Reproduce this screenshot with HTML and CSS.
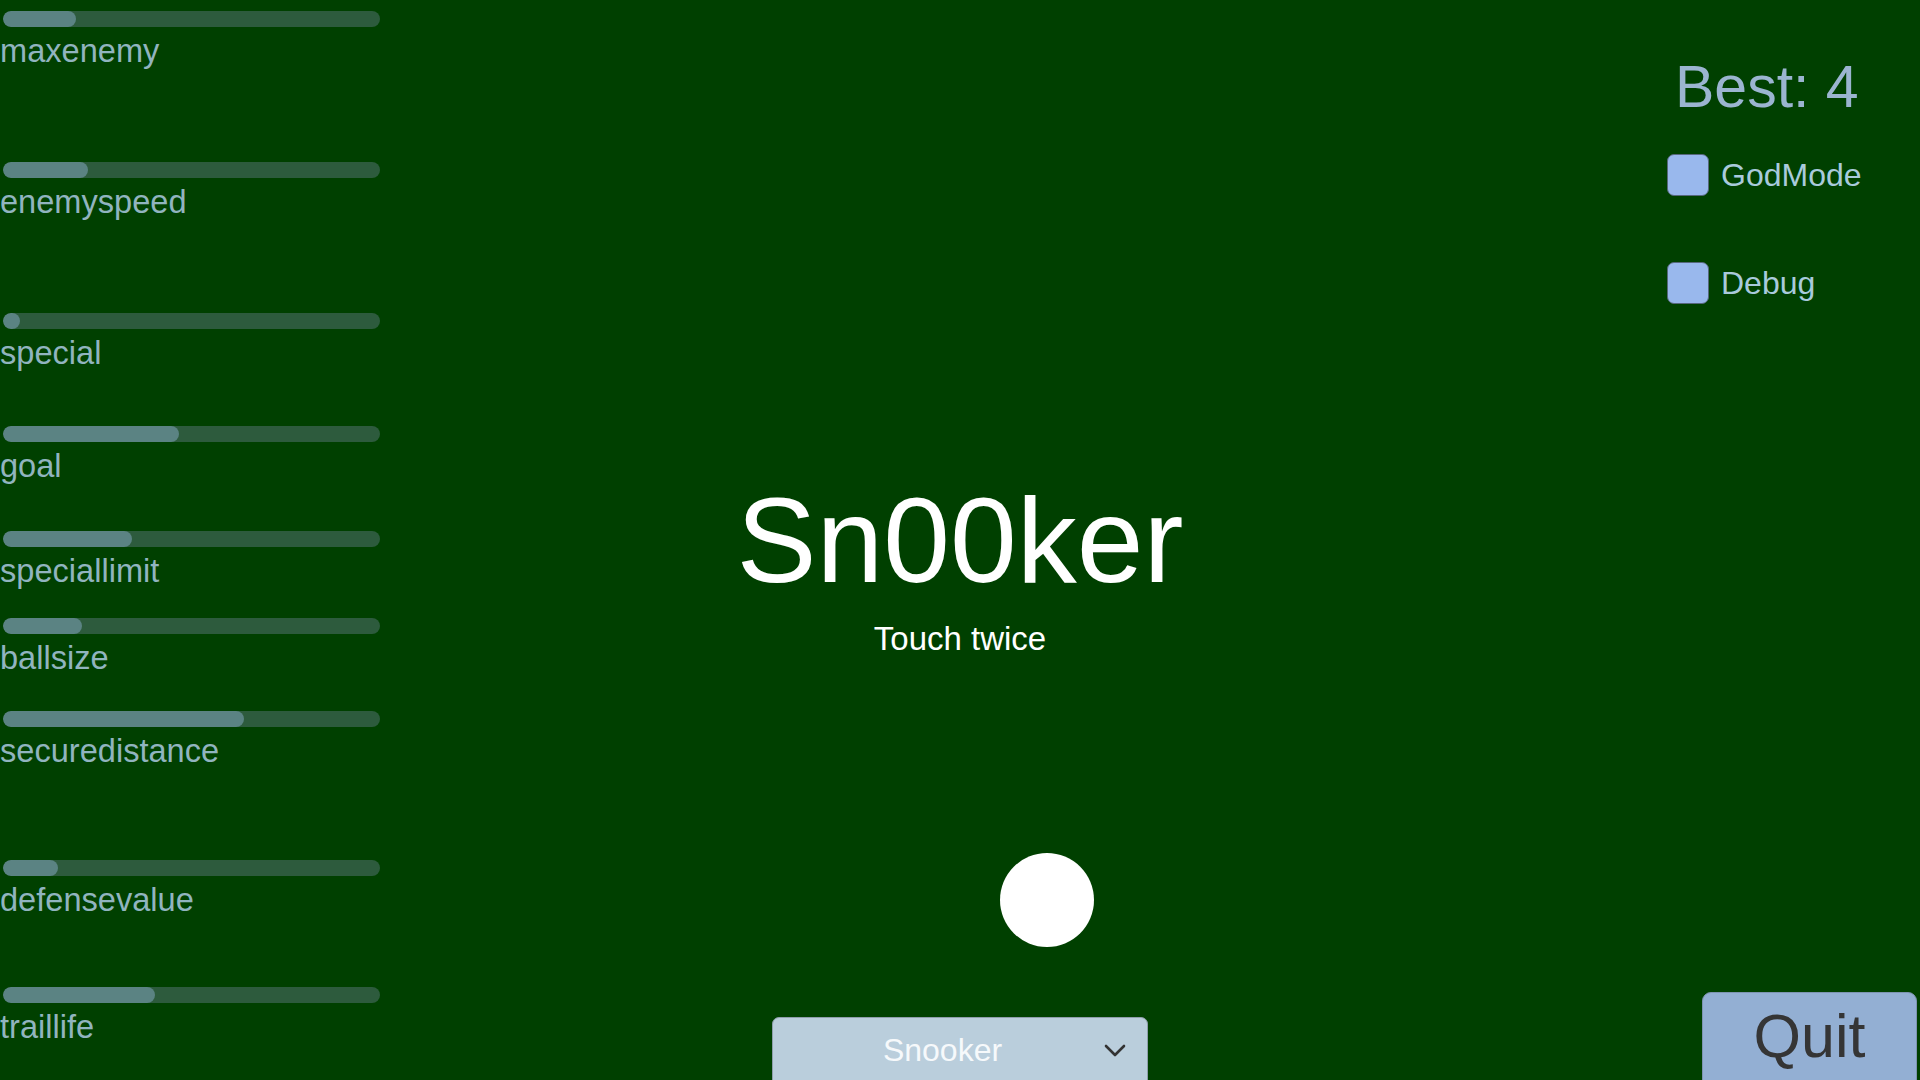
FILE: index.html
```html
<!DOCTYPE html>
<html lang="en">
<head>
<meta charset="utf-8">
<title>Sn00ker</title>
<link rel="stylesheet" href="styles.css">
</head>
<body>
<div class="stage">
  <aside class="sliders">
    <div class="slider s1"><div class="track"><div class="fill" style="width:73px"></div></div><div class="label">maxenemy</div></div>
    <div class="slider s2"><div class="track"><div class="fill" style="width:85px"></div></div><div class="label">enemyspeed</div></div>
    <div class="slider s3"><div class="track"><div class="fill" style="width:17px"></div></div><div class="label">special</div></div>
    <div class="slider s4"><div class="track"><div class="fill" style="width:176px"></div></div><div class="label">goal</div></div>
    <div class="slider s5"><div class="track"><div class="fill" style="width:129px"></div></div><div class="label">speciallimit</div></div>
    <div class="slider s6"><div class="track"><div class="fill" style="width:79px"></div></div><div class="label">ballsize</div></div>
    <div class="slider s7"><div class="track"><div class="fill" style="width:241px"></div></div><div class="label">securedistance</div></div>
    <div class="slider s8"><div class="track"><div class="fill" style="width:55px"></div></div><div class="label">defensevalue</div></div>
    <div class="slider s9"><div class="track"><div class="fill" style="width:152px"></div></div><div class="label">traillife</div></div>
  </aside>

  <main class="center">
    <h1 class="title">Sn00ker</h1>
    <div class="hint">Touch twice</div>
    <div class="dropdown">
      <span class="dd-label">Snooker</span>
      <svg class="dd-arrow" width="22" height="13" viewBox="0 0 22 13"><polyline points="2,2 11,11 20,2" fill="none" stroke="#333" stroke-width="2.6" stroke-linecap="round" stroke-linejoin="round"/></svg>
    </div>
  </main>

  <aside class="right">
    <div class="best">Best: 4</div>
    <div class="check first"><span class="box"></span><span class="check-label">GodMode</span></div>
    <div class="check"><span class="box"></span><span class="check-label">Debug</span></div>
    <button class="quit">Quit</button>
  </aside>

  <div class="ball"></div>
</div>
</body>
</html>
```

FILE: styles.css
```css
html, body {
  margin: 0;
  padding: 0;
  width: 1920px;
  height: 1080px;
  overflow: hidden;
  background: #004000;
  font-family: "Liberation Sans", Arial, sans-serif;
}

.stage {
  position: relative;
  width: 1920px;
  height: 1080px;
  display: grid;
  grid-template-columns: 385px 1fr 385px;
}

/* Sliders */
.sliders {
  display: flex;
  flex-direction: column;
}
.slider {
  display: flex;
  flex-direction: column;
}
.s1 { margin-top: 11px; }
.s2 { margin-top: 93px; }
.s3 { margin-top: 93px; }
.s4 { margin-top: 55px; }
.s5 { margin-top: 47px; }
.s6 { margin-top: 29px; }
.s7 { margin-top: 35px; }
.s8 { margin-top: 91px; }
.s9 { margin-top: 69px; }

.track {
  margin-left: 3px;
  width: 377px;
  height: 16px;
  border-radius: 8px;
  background: #2d5b3d;
  overflow: hidden;
}
.fill {
  height: 16px;
  min-width: 16px;
  border-radius: 8px;
  background: #5b8383;
}
.label {
  margin-top: 6px;
  font-size: 32.6px;
  line-height: 36px;
  color: #91b4bf;
}

/* Center */
.center {
  display: flex;
  flex-direction: column;
  align-items: center;
}
.title {
  margin: 480px 0 0 0;
  font-size: 120px;
  line-height: 120px;
  font-weight: normal;
  color: #ffffff;
}
.hint {
  margin-top: 21px;
  font-size: 33px;
  line-height: 36px;
  color: #ffffff;
}
.dropdown {
  margin-top: auto;
  margin-bottom: -10px;
  box-sizing: border-box;
  width: 376px;
  height: 73px;
  padding: 0 21px 7px 8px;
  display: flex;
  align-items: center;
  background: #bacedc;
  border: 1px solid #8e9eab;
  border-radius: 7px;
}
.dd-label {
  flex: 1;
  text-align: center;
  font-size: 32px;
  line-height: 36px;
  color: #f6f9fb;
}
.dd-arrow {
  display: block;
}

/* Right */
.right {
  display: flex;
  flex-direction: column;
  padding-left: 132px;
}
.best {
  margin: 54px 0 0 8px;
  font-size: 59px;
  line-height: 66px;
  color: #9bb5d0;
}
.check {
  display: flex;
  align-items: center;
  gap: 12px;
  margin-top: 66px;
}
.check.first {
  margin-top: 34px;
}
.box {
  box-sizing: border-box;
  width: 42px;
  height: 42px;
  background: #99b8ed;
  border: 1px solid #56677c;
  border-radius: 7px;
}
.check-label {
  font-size: 32px;
  line-height: 36px;
  color: #a9cadc;
}
.quit {
  margin: auto 3px -12px 0;
  align-self: flex-end;
  box-sizing: border-box;
  width: 215px;
  height: 100px;
  padding: 0 0 12px 0;
  background: #93afd3;
  border: 1px solid #7d93b0;
  border-radius: 9px;
  font-family: "Liberation Sans", Arial, sans-serif;
  font-size: 61px;
  line-height: 70px;
  color: #353535;
}

/* Game ball */
.ball {
  position: absolute;
  left: 1000px;
  top: 853px;
  width: 94px;
  height: 94px;
  border-radius: 50%;
  background: #ffffff;
}
```
